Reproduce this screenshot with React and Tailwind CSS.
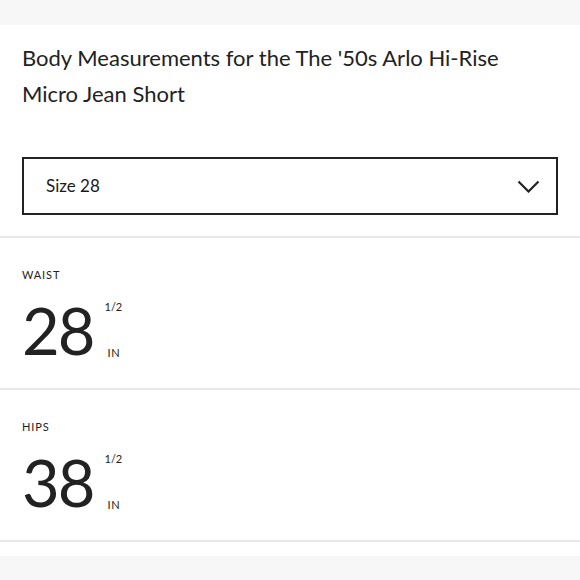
import React from 'react';

const Measurement = ({ label, value }) => (
  <div className="border-b-2 border-[#e8e8e8] px-[22px] pt-[30px] pb-[28px]">
    <div className="text-[11px] leading-[14px] tracking-[0.08em] text-[#222]">{label}</div>
    <div className="flex items-stretch mt-[18px]">
      <span className="text-[65px] leading-[60px] tracking-[-0.03em] text-[#222]">{value}</span>
      <div className="flex flex-col justify-between ml-[11px] py-[1px] text-[11px] leading-[12px] text-[#222]">
        <span>1/2</span>
        <span className="ml-[3px] tracking-[0.06em]">IN</span>
      </div>
    </div>
  </div>
);

export default function App() {
  return (
    <div className="w-[580px] h-[580px] bg-white overflow-hidden font-['Lato','Liberation_Sans',sans-serif] text-[#222]">
      <div className="h-[25px] bg-[#f7f7f7]" />

      <div className="px-[22px] pt-[15px] pb-[21px] border-b-2 border-[#e8e8e8]">
        <h1 className="text-[22px] leading-[36px] font-normal">
          Body Measurements for the The '50s Arlo Hi-Rise Micro Jean Short
        </h1>
        <button className="mt-[45px] w-full h-[58px] border-2 border-[#222] flex items-center justify-between pl-[22px] pr-[16px] text-left">
          <span className="text-[17px] text-[#1a1a1a]">Size 28</span>
          <svg width="23" height="13" viewBox="0 0 23 13" fill="none" stroke="#222" strokeWidth="2.2">
            <path d="M1.5 1.5 L11.5 11.5 L21.5 1.5" />
          </svg>
        </button>
      </div>

      <Measurement label="WAIST" value="28" />
      <Measurement label="HIPS" value="38" />

      <div className="h-[14px] bg-white" />
      <div className="h-[40px] bg-[#f7f7f7]" />
    </div>
  );
}
